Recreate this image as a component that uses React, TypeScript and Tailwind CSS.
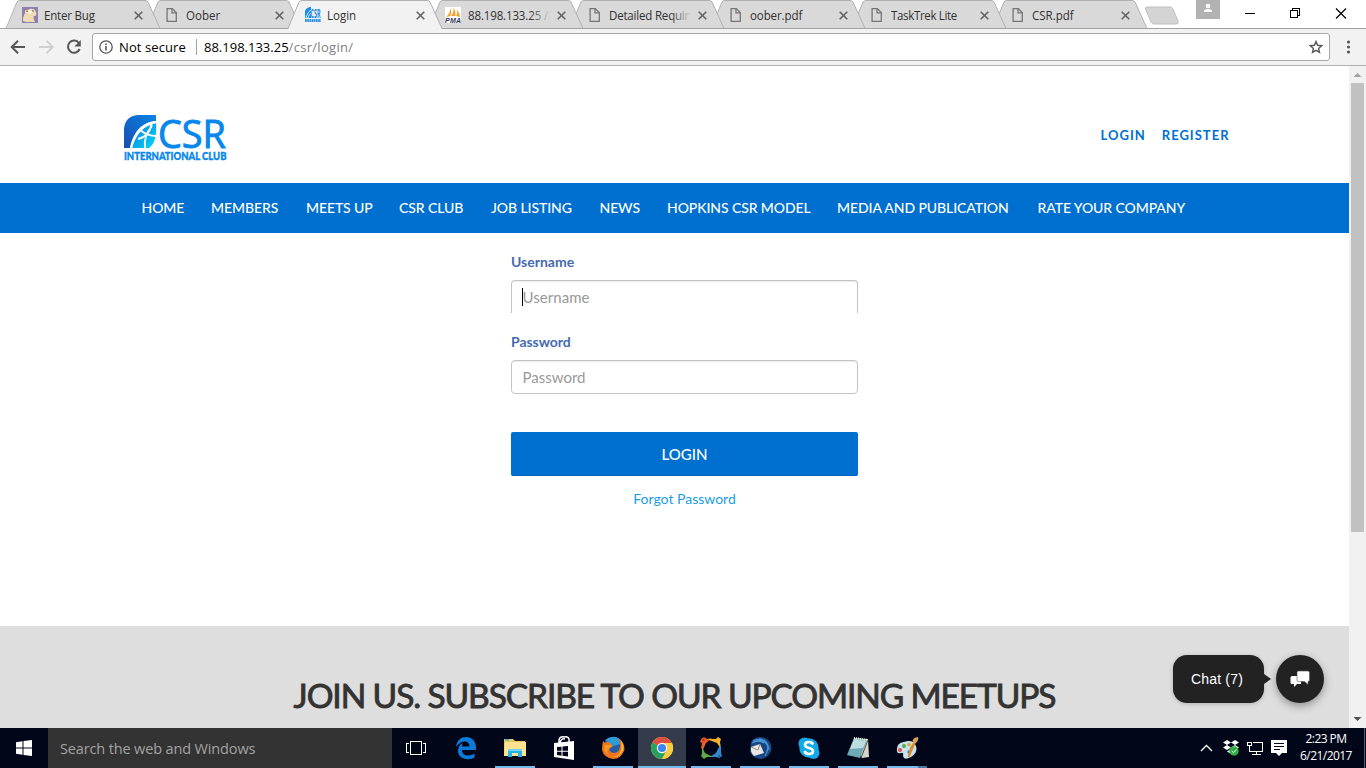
import React from "react";

type IconProps = { className?: string };

const PageIcon = () => (
  <svg width="16" height="16" viewBox="0 0 16 16" fill="none" stroke="#757575" strokeWidth="1.3">
    <path d="M4.100 1.600h5.200l4 4v8.800H4.100z" />
    <path d="M9 1.800v4.100h4.200" />
  </svg>
);

const BugIcon = () => (
  <svg width="16" height="16" viewBox="0 0 16 16">
    <rect width="16" height="16" fill="#8e7fae" />
    <path d="M1 14C0.500 11 2 8 3 6C2.500 3 4 2 6 3C8 1 13 1 14 5C15 7 14.500 9 12 9C11 11 12 13 13 15H4z" fill="#eedbb6" />
    <circle cx="8" cy="5" r="1.800" fill="#fff8e8" />
    <path d="M4 4.500Q5 3 6 4.500M10 4Q11 3 12 4.500" fill="none" stroke="#7b6b59" />
  </svg>
);

const CsrIcon = () => (
  <svg className="overflow-visible" width="17" height="16" viewBox="0 0 17 16">
    <path d="M1 11V5q0-4 5-5h1v11z" fill="#168bed" />
    <path d="M2 11C3 7 5 4 7 3M4 11C5 8 6 7 7 6" stroke="#d8f3ff" fill="none" />
    <text x="6.500" y="11" fontFamily="Open Sans, sans-serif" fontWeight="700" fontSize="12" textLength="10" lengthAdjust="spacingAndGlyphs" fill="#168bed">CSR</text>
    <path d="M1 13.500h16" stroke="#2b91e6" strokeWidth="3" strokeDasharray="1.700 .5" />
  </svg>
);

const PmaIcon = () => (
  <svg width="16" height="16" viewBox="0 0 16 16">
    <rect width="16" height="16" fill="#fff" />
    <path d="M1 10Q5 7 5.500 1Q7 5 5.500 9zM6 9Q9 6 8.500 0Q11 5 10.500 9zM11 9Q13 6 11.500 2Q15 6 15 10z" fill="#f6a12e" />
    <text x="0" y="16" fontFamily="Liberation Sans, sans-serif" fontStyle="italic" fontWeight="700" fontSize="7" textLength="16" fill="#33335f">PMA</text>
  </svg>
);

type TabInfo = {
  title: string;
  icon: () => React.ReactElement;
  z: string;
  active?: boolean;
  text: string;
  fade?: boolean;
};

const tabs: TabInfo[] = [
  { title: "Enter Bug", icon: BugIcon, z: "z-[8]", text: "pl-0 tracking-[-0.2px]" },
  { title: "Oober", icon: PageIcon, z: "z-[7]", text: "pl-px tracking-[0px]" },
  { title: "Login", icon: CsrIcon, z: "z-[9]", active: true, text: "pl-0 tracking-[0px]" },
  { title: "88.198.133.25 / ", icon: PmaIcon, z: "z-[6]", text: "pl-px tracking-[-0.15px]", fade: true },
  { title: "Detailed Requir", icon: PageIcon, z: "z-[5]", text: "pl-px tracking-[-0.2px]", fade: true },
  { title: "oober.pdf", icon: PageIcon, z: "z-[4]", text: "pl-px tracking-[-0.1px]" },
  { title: "TaskTrek Lite", icon: PageIcon, z: "z-[3]", text: "pl-px tracking-[-0.35px]" },
  { title: "CSR.pdf", icon: PageIcon, z: "z-[2]", text: "pl-px tracking-[0px]" },
];

function Tab({ tab }: { tab: TabInfo }) {
  const Icon = tab.icon;
  return (
    <div className={`relative -mr-[14px] h-[29px] w-[155px] shrink-0 ${tab.z}`}>
      <svg className="absolute inset-0" width="155" height="29" viewBox="0 0 155 29">
        <path d="M0 29L11 2Q12 .5 14 .5H139Q141 .5 142 2L154 29z" fill={tab.active ? "#f2f2f2" : "#d9d9d9"} />
        <path d="M0 28.500L11 2Q12 .5 14 .5H139Q141 .5 142 2L154 28.500" fill="none" stroke="#b0b0b0" />
        {!tab.active && <path d="M0 28.500H155" stroke="#a3a3a3" />}
      </svg>
      <div className="relative flex h-[29px] items-center pl-4">
        <Icon />
        <div className={`relative ml-[6px] mt-px ${tab.active ? "w-[82.500px]" : "w-[83.500px]"}`}>
          <span className={`block whitespace-nowrap font-['Open_Sans',sans-serif] text-[12px] leading-[17px] text-[#303030] ${tab.text}`}>
            <span className="inline-block origin-left scale-x-[0.96]">{tab.title}</span>
          </span>
          {tab.fade ? <span className="absolute inset-y-0 -right-[5px] w-[26px] bg-gradient-to-r from-transparent to-[#d9d9d9] to-80%" /> : null}
        </div>
        <svg className="relative ml-[6px] mt-px" width="9" height="9" viewBox="0 0 9 9" stroke="#626262" strokeWidth="1.6">
          <path d="M.7.7l7.600 7.600M8.300.7L.7 8.300" />
        </svg>
      </div>
    </div>
  );
}

function TabStrip() {
  return (
    <div className="flex h-[29px] border-b border-[#a3a3a3] bg-white pl-[6px]">
      <div className="isolate flex h-[29px]">
        {tabs.map((t) => (
          <Tab key={t.title} tab={t} />
        ))}
      </div>
      <svg className="ml-[10px] mt-[6px] shrink-0" width="36" height="19" viewBox="0 0 36 19">
        <path d="M3 1H26Q28 1 29 3L34 15Q35 18 32 18H10Q8 18 7 16L1.500 3Q1 1 3 1z" fill="#d4d4d4" stroke="#c0c0c0" />
      </svg>
      <svg className="ml-[16px] shrink-0" width="24" height="19" viewBox="0 0 24 19">
        <path d="M0 0h24v19H0z" fill="#b2b2b2" />
        <circle cx="12" cy="6" r="2.300" fill="#fff" />
        <path d="M8 12V11Q8 9 12 9Q16 9 16 11V12z" fill="#fff" />
      </svg>
      <svg className="ml-[24px] mt-2 shrink-0" width="104" height="11" viewBox="0 0 104 11" fill="none" stroke="#000" shapeRendering="crispEdges">
        <path d="M1 5.500h10" />
        <path d="M46.500 2.500h7v7h-7zM48.500 2.500v-2h7v7h-2" />
        <path d="M92 .5l10 10M102 .5l-10 10" shapeRendering="auto" strokeWidth="1.200" />
      </svg>
    </div>
  );
}

function Toolbar() {
  return (
    <div className="flex h-[37px] items-center border-b border-[#b0b0b0] bg-[#f2f2f2]">
      <svg className="shrink-0" width="92" height="36" viewBox="0 0 92 36" fill="none" strokeWidth="2">
        <path d="M25 18H12.500M18 11.700L11.700 18L18 24.300" stroke="#565656" />
        <path d="M39 18H52M46.500 11.700L52.800 18L46.500 24.300" stroke="#d0d0d0" />
        <path d="M79 14A6.100 6.100 0 1 0 79.700 20" stroke="#565656" />
        <path d="M80.800 11v6.500h-6.500z" fill="#565656" />
      </svg>
      <div className="flex h-7 w-[1238px] items-center rounded-[3px] border border-[#a8a8a8] bg-white pl-[6px] pr-[6px] font-['Open_Sans',sans-serif] text-[13px]">
        <svg width="14" height="14" viewBox="0 0 14 14" fill="none" stroke="#565656">
          <circle cx="7" cy="7" r="6.200" strokeWidth="1.300" />
          <path d="M7 6v4.500M7 3.500v1.500" strokeWidth="1.600" />
        </svg>
        <span className="ml-[6px] w-[68px] whitespace-nowrap pt-px tracking-[0.1px] text-black">Not secure</span>
        <span className="ml-[9px] mr-[7px] h-4 w-px bg-[#a0a0a0]" />
        <span className="whitespace-nowrap pt-px tracking-[0px] text-black">
          88.198.133.25<span className="tracking-[0.3px] text-[#808080]">/csr/login/</span>
        </span>
        <svg className="ml-auto" width="14" height="14" viewBox="0 0 14 14" fill="none" stroke="#565656" strokeWidth="1.400">
          <path d="M7 1.500l1.600 3.800 4.100.4-3.100 2.700.9 4L7 10.300l-3.500 2.100.9-4-3.100-2.700 4.100-.4z" />
        </svg>
      </div>
      <svg className="ml-4" width="5" height="14" viewBox="0 0 5 14" fill="#565656">
        <circle cx="2.500" cy="2" r="1.600" />
        <circle cx="2.500" cy="7" r="1.600" />
        <circle cx="2.500" cy="12" r="1.600" />
      </svg>
    </div>
  );
}

function Logo() {
  return (
    <svg className="overflow-visible" width="104" height="47" viewBox="0 0 104 47">
      <defs>
        <linearGradient id="corner" x1="0" y1="1" x2="1" y2="0">
          <stop stopColor="#1b4eb0" />
          <stop offset="1" stopColor="#0784e8" />
        </linearGradient>
        <linearGradient id="globe" x1="0" y1="0" x2="1" y2="1">
          <stop stopColor="#0c7de0" />
          <stop offset="1" stopColor="#00d8f8" />
        </linearGradient>
      </defs>
      <path d="M0 33V14Q1 1 14 0H32V6C17 7 9 18 6 33z" fill="url(#corner)" />
      <path d="M8 33C11 21 18 11 32 8C33 19 31 29 25 33z" fill="url(#globe)" />
      <path d="M7 33C11 18 19 9 32 7M16 15C21 19 26 21 32 21M14 24C20 23 26 18 28 8M21 33C20 26 22 18 28 11" fill="none" stroke="#fff" strokeWidth="1.900" />
      <text x="34" y="32.500" fontFamily="Open Sans, sans-serif" fontSize="38" textLength="68" lengthAdjust="spacingAndGlyphs" fill="#0787ec" stroke="#0787ec" strokeWidth=".9">CSR</text>
      <text x="0" y="44.500" fontFamily="Lato, sans-serif" fontSize="12" fontWeight="900" textLength="102.500" lengthAdjust="spacingAndGlyphs" fill="#0787ec" stroke="#0787ec" strokeWidth=".4">INTERNATIONAL CLUB</text>
    </svg>
  );
}

const navItems = [
  { label: "HOME", w: "w-[69.5px]" },
  { label: "MEMBERS", w: "w-[95px]" },
  { label: "MEETS UP", w: "w-[93px]" },
  { label: "CSR CLUB", w: "w-[92px]" },
  { label: "JOB LISTING", w: "w-[108.5px]" },
  { label: "NEWS", w: "w-[67.5px]" },
  { label: "HOPKINS CSR MODEL", w: "w-[170px]" },
  { label: "MEDIA AND PUBLICATION", w: "w-[200.5px]" },
  { label: "RATE YOUR COMPANY", w: "w-[160px]" },
];

function Site() {
  return (
    <main className="relative flex w-[1349px] flex-col overflow-hidden bg-white font-[Lato,sans-serif]">
      <header className="flex h-[117px] shrink-0 items-start justify-between pl-[124px] pr-[119.5px]">
        <div className="mt-[49px]">
          <Logo />
        </div>
        <div className="mt-[60px] flex gap-4 text-[13px] font-bold leading-[19px] tracking-[1px] text-[#0070d0]">
          <a>LOGIN</a>
          <a>REGISTER</a>
        </div>
      </header>
      <nav className="flex h-[50px] shrink-0 items-center bg-[#0070d0] pl-[141.5px] text-[14px] font-medium tracking-[-0.09px] text-white">
        {navItems.map((n) => (
          <a key={n.label} className={`shrink-0 whitespace-nowrap leading-[20px] pt-px pb-px ${n.w}`}>
            {n.label}
          </a>
        ))}
      </nav>
      <form className="ml-[511px] flex h-[393px] w-[347px] shrink-0 flex-col pt-[19px]">
        <label className="h-7 text-[14px] font-bold leading-5 tracking-[0px] text-[#456bb0]">Username</label>
        <div className="flex h-[33px] items-center rounded-t-[4px] border border-b-0 border-[#c4c4c4] pl-[10px] text-[15px] text-[#999] shadow-[inset_0_1px_1px_rgba(0,0,0,.08)]">
          <span className="-mr-px h-[18px] w-px bg-black" />
          <span className="ml-[0.5px] tracking-[0.05px]">Username</span>
        </div>
        <label className="mt-[19px] h-7 text-[14px] font-bold leading-5 tracking-[-0.05px] text-[#456bb0]">Password</label>
        <div className="flex h-[34px] items-center rounded-[4px] border border-[#c4c4c4] pl-[10.5px] text-[15px] text-[#999] shadow-[inset_0_1px_1px_rgba(0,0,0,.08)]">
          Password
        </div>
        <button type="button" className="mt-[38px] h-11 rounded-[2px] border-b border-[#0064bd] bg-[#0070d0] pt-[2px] text-[15px] font-medium text-white">
          LOGIN
        </button>
        <a className="mt-[13px] text-center text-[14px] leading-5 text-[#1a9ee6]">Forgot Password</a>
      </form>
      <section className="h-[102px] shrink-0 bg-[#dedede] pt-[47px]">
        <h2 className="whitespace-nowrap text-center text-[33.5px] font-normal leading-[44px] tracking-[-1.1px] text-[#333] [-webkit-text-stroke:0.9px_#333]">JOIN US. SUBSCRIBE TO OUR UPCOMING MEETUPS</h2>
      </section>
      <div className="absolute bottom-[25px] right-[25px] flex h-12 items-center font-['Liberation_Sans',sans-serif] text-[14px] text-white">
        <div className="flex h-12 w-[91px] items-center justify-center rounded-[14px] bg-[#222] pr-[3px] tracking-[0.2px] shadow-[0_1px_4px_rgba(0,0,0,.2)]">Chat (7)</div>
        <svg width="12" height="10" viewBox="0 0 12 10">
          <path d="M0 0L7 5L0 10z" fill="#222" />
        </svg>
        <div className="flex size-12 items-center justify-center rounded-full bg-[#222] shadow-[0_3px_8px_rgba(0,0,0,.35)]">
          <svg width="20" height="18" viewBox="0 0 20 18">
            <path d="M2 6h9v8H7l-3 3v-3H2q-1.500 0-1.500-1.500V7.500Q.5 6 2 6z" fill="#fff" />
            <path d="M8.500 1h9.500q1.500 0 1.500 1.500V10q0 1.500-1.500 1.500v3l-3.500-3h-6Q7 11.500 7 10V2.500Q7 1 8.500 1z" fill="#fff" stroke="#555" strokeWidth=".6" />
          </svg>
        </div>
      </div>
    </main>
  );
}

function Scrollbar() {
  return (
    <div className="flex w-[17px] flex-col items-center bg-[#f1f1f1]">
      <svg width="17" height="17" viewBox="0 0 17 17">
        <path d="M4.500 11L8.500 7L12.500 11z" fill="#a0a0a0" />
      </svg>
      <div className="h-[449px] w-[13px] bg-[#c1c1c1]" />
      <svg className="mt-auto" width="17" height="17" viewBox="0 0 17 17">
        <path d="M4.500 6L8.500 10L12.500 6z" fill="#505050" />
      </svg>
    </div>
  );
}

const EdgeIcon = () => (
  <svg width="24" height="24" viewBox="0 0 24 24">
    <path d="M2 11C3 4 7 1 12 1C19 1 22 6 22 12V14H8C8 18 11 19.500 14 19.500C17 19.500 19 18.500 20.500 17.500V21.500C18 23 15 23.500 12 23C7 22.500 4 19 4 15C4 11 6 8.500 9 7C8 8.500 8 9.500 8 10.500H15.500C15.500 7 13.500 5.500 10.500 5.500C7 5.500 4 8 2 11z" fill="#0a7bdb" />
  </svg>
);
const ExplorerIcon = () => (
  <svg width="24" height="24" viewBox="0 0 24 24">
    <path d="M1 3H10L12 5H22V20H1z" fill="#edc65b" />
    <path d="M2 6H23V20H1z" fill="#ffe391" />
    <path d="M2 3h4v1.500H2z" fill="#37b8ed" />
    <path d="M5 13H19V21H15V17H9V21H5z" fill="#28b4e9" />
    <path d="M5 13H19V15H5z" fill="#70d4f5" />
  </svg>
);
const StoreIcon = () => (
  <svg width="24" height="24" viewBox="0 0 24 24">
    <path d="M2 7L22 5V24L2 21z" fill="#fff" />
    <path d="M7 8V4Q8 0 12 1Q16 0 17 3V7M8 7Q9 2 13 3" fill="none" stroke="#fff" strokeWidth="1.500" />
    <path d="M5 11l4.500-.3v4H5zm5.500-.4L16 10v4.700h-5.500zM5 15.700h4.500v4L5 19zm5.500 0H16v4.800l-5.500-.7z" fill="#01071a" />
  </svg>
);
const FirefoxIcon = () => (
  <svg width="24" height="24" viewBox="0 0 24 24">
    <circle cx="12.500" cy="11.500" r="10.500" fill="#235da8" />
    <path d="M4 4Q9 0 15 1Q20 3 20 8L12 10z" fill="#309bd5" />
    <path d="M2 5L4 7Q6 5 9 7L12 10L9 12Q7 15 12 17Q18 17 19 11V6L17 2Q24 6 23.500 14Q20 23 12 23Q3 22 1 14Q1 9 2 5z" fill="#ee731b" />
    <path d="M20 5Q23 9 22 14Q18 22 11 21Q16 21 19 17Q22 12 20 5z" fill="#ffd23e" />
    <path d="M3 10Q5 8 8 9L12 10L8 12Q4 16 9 19Q3 18 3 10z" fill="#f39a25" />
  </svg>
);
const ChromeIcon = () => (
  <svg width="24" height="24" viewBox="0 0 24 24">
    <circle cx="12" cy="12" r="11" fill="#fbcd3e" />
    <path d="M12 12L2.500 6.500A11 11 0 0 1 21.500 6.500z" fill="#df4c40" />
    <path d="M2.500 6.500A11 11 0 0 0 12 23L17 14.500L12 12z" fill="#25a261" />
    <path d="M12 7H22A11 11 0 0 1 12 23L16.500 14.500z" fill="#fbcd3e" />
    <circle cx="12" cy="12" r="5.200" fill="#fff" />
    <circle cx="12" cy="12" r="4.100" fill="#4085ee" />
  </svg>
);
const RingIcon = () => (
  <svg width="24" height="24" viewBox="0 0 24 24">
    <path d="M2 3l3-2 3 2 5-1-6 5-3 7-2-2 1-5-2-1z" fill="#e55b2b" />
    <path d="M10 3l7 0 2-2 3 2-1 3 1 7-4-6-8-3z" fill="#f4b12b" />
    <path d="M22 9v8l1 3-3 2-3-1-6 0 6-4 3-6z" fill="#328bd0" />
    <path d="M3 11l3 6 8 4-6 0-3 2-3-3 1-2z" fill="#62aa42" />
    <circle cx="4.500" cy="4" r="1.200" fill="#a83820" />
    <circle cx="20" cy="20" r="1.200" fill="#1e5f9c" />
  </svg>
);
const MailIcon = () => (
  <svg width="24" height="24" viewBox="0 0 24 24">
    <path d="M3 6Q8-1 17 2Q25 6 23 15Q20 23 12 23Q5 22 2 16z" fill="#174680" />
    <path d="M5 5Q14 1 19 9M11 3Q20 4 21 14M16 4Q23 10 17 20M4 7Q11 3 16 7" fill="none" stroke="#4695d2" strokeWidth="1.300" />
    <path d="M3 11L12 8L16 17L6 20Q2 16 3 11z" fill="#e9e7e3" />
    <path d="M3 11L10 14L12 8" fill="none" stroke="#8c8987" />
  </svg>
);
const SkypeIcon = () => (
  <svg width="24" height="24" viewBox="0 0 24 24">
    <circle cx="12" cy="12" r="9.700" fill="#12a9e8" />
    <circle cx="7.500" cy="7.500" r="6" fill="#12a9e8" />
    <circle cx="16.500" cy="17" r="6" fill="#12a9e8" />
    <path d="M16 8.500Q15 6 12 6Q8 6 8 9Q8 11 12 12Q16 13 16 15Q16 18 12 18Q8.500 18 7.500 15" fill="none" stroke="#fff" strokeWidth="2.600" />
  </svg>
);
const NotesIcon = () => (
  <svg width="24" height="24" viewBox="0 0 24 24">
    <path d="M8 2L22 3L23 21L16 22z" fill="#d7d4ca" />
    <path d="M8 2L21 4L14 22L1 19z" fill="#6eabb6" />
    <path d="M8 3L20 5L17 12L4 13z" fill="#bddde1" />
    <path d="M8 2L21 4" stroke="#efefe4" strokeWidth="2" strokeDasharray="1 1" />
    <path d="M22 4L15 22" stroke="#56523f" />
  </svg>
);
const PaintIcon = () => (
  <svg width="24" height="24" viewBox="0 0 24 24">
    <path d="M2 15Q1 7 9 6Q18 3 21 10Q23 17 16 21Q9 25 8 20Q9 16 6 17Q2 18 2 15z" fill="#c8e2ee" />
    <circle cx="5" cy="14" r="2" fill="#df5040" />
    <circle cx="9" cy="10" r="2" fill="#56ac4c" />
    <circle cx="14" cy="8.500" r="1.800" fill="#e6a72e" />
    <circle cx="14" cy="16" r="1.800" fill="#3785c8" />
    <path d="M20 6L13.500 21L16 12z" fill="#c9731d" stroke="#dd8b31" strokeWidth="2" />
    <path d="M18 7Q16 2 23 1Q24 4 21 7z" fill="#d7a35b" />
  </svg>
);

const apps: { icon: (p: IconProps) => React.ReactElement; line: string; cell?: string }[] = [
  { icon: EdgeIcon, line: "w-0" },
  { icon: ExplorerIcon, line: "w-10" },
  { icon: StoreIcon, line: "w-0" },
  { icon: FirefoxIcon, line: "w-10" },
  { icon: ChromeIcon, line: "w-12", cell: "bg-[#343b4b]" },
  { icon: RingIcon, line: "w-10" },
  { icon: MailIcon, line: "w-10" },
  { icon: SkypeIcon, line: "w-10" },
  { icon: NotesIcon, line: "w-10" },
  { icon: PaintIcon, line: "w-10 border-r-[9px] border-[#4b789f]" },
];

function Taskbar() {
  return (
    <footer className="flex h-10 shrink-0 bg-[#010719] font-['Open_Sans',sans-serif]">
      <div className="flex w-12 items-center justify-center">
        <svg width="16" height="16" viewBox="0 0 16 16" fill="#fff">
          <path d="M0 2.200L6.500 1.300V7.500H0zM7.500 1.100L16 0V7.500H7.500zM0 8.500H6.500V14.700L0 13.800zM7.500 8.500H16V16L7.500 14.900z" />
        </svg>
      </div>
      <div className="flex w-[344px] items-center bg-[#333] pl-3 pt-px text-[14.5px] tracking-[-0.14px] text-[#a2a2a2]">Search the web and Windows</div>
      <div className="flex w-12 items-center justify-center">
        <svg width="20" height="14" viewBox="0 0 20 14" fill="none" stroke="#fff" shapeRendering="crispEdges">
          <path d="M4.500.5h11v13h-11zM3 2.500H.5v9H3M17 2.500h2.500v9H17" />
        </svg>
      </div>
      <div className="ml-[2px] flex gap-px">
        {apps.map(({ icon: Icon, line, cell }, i) => (
          <div key={i} className={`flex w-12 flex-col items-center justify-between pt-2 ${cell ?? ""}`}>
            <Icon />
            <span className={`h-[2px] bg-[#76b9ed] ${line}`} />
          </div>
        ))}
      </div>
      <div className="ml-auto flex items-center">
        <svg width="88" height="20" viewBox="0 0 88 20" fill="none" stroke="#fff">
          <path d="M1 13L6.500 7.500L12 13" strokeWidth="1.300" />
          <path d="M27 2l4 2.500-4 2.500-4-2.500zM35 2l4 2.500-4 2.500-4-2.500zM27 7l4 2.500-4 2.500-4-2.500zM35 7l4 2.500-4 2.500-4-2.500zM31 11l4 2.500-4 2.500-4-2.500z" fill="#fff" stroke="none" />
          <circle cx="34" cy="13" r="4.700" fill="#2eae43" stroke="none" />
          <path d="M31.800 13l1.700 1.700 3-3.200" />
          <path d="M53 4.500h9.500v8.500H50M47.500 4.500h4v3h-4zM49.500 8v5H53M56.500 13v3M52 16.500h9" shapeRendering="crispEdges" />
          <path d="M71 2h16v13h-5l-3 3-3-3h-5z" fill="#fff" stroke="none" />
          <path d="M74 5.500h10M74 8.500h10M74 11.500h6" stroke="#010719" />
        </svg>
        <div className="-mt-[3px] w-[74px] pl-[2px] text-center text-[12px] leading-[17px] tracking-[-0.55px] text-white">
          <div>2:23 PM</div>
          <div>6/21/2017</div>
        </div>
        <div className="ml-[2px] mr-px h-10 w-px bg-[#58606b]" />
      </div>
    </footer>
  );
}

export default function App() {
  return (
    <div className="flex h-[768px] w-[1366px] flex-col overflow-hidden bg-white">
      <TabStrip />
      <Toolbar />
      <div className="flex h-[662px] shrink-0">
        <Site />
        <Scrollbar />
      </div>
      <Taskbar />
    </div>
  );
}
